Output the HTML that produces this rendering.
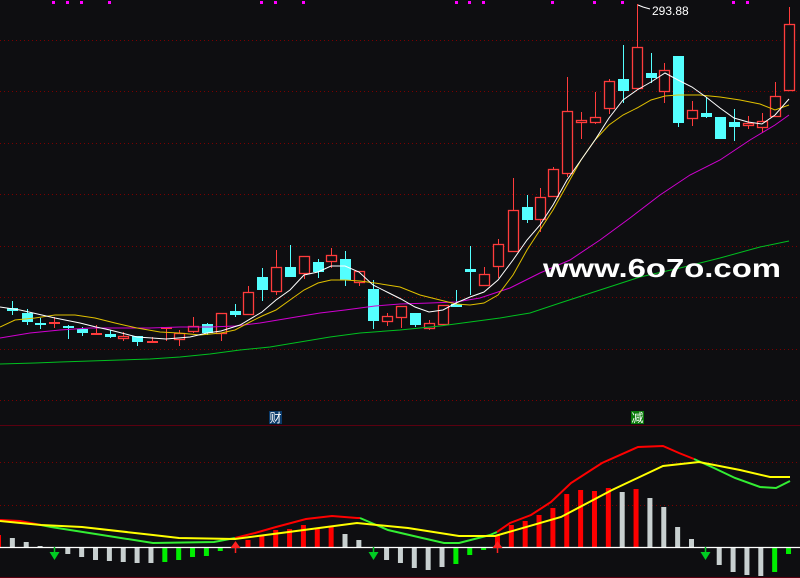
<!DOCTYPE html>
<html><head><meta charset="utf-8"><style>
html,body{margin:0;padding:0;background:#0e0e11;}
svg{display:block;}
</style></head><body>
<svg id="s" width="800" height="578" viewBox="0 0 800 578" xmlns="http://www.w3.org/2000/svg">
<rect width="800" height="578" fill="#0e0e11"/>
<g stroke="#7a0000" stroke-width="1" stroke-dasharray="1 3" shape-rendering="crispEdges">
<line x1="0" y1="40.5" x2="800" y2="40.5"/><line x1="0" y1="91.5" x2="800" y2="91.5"/>
<line x1="0" y1="143.5" x2="800" y2="143.5"/><line x1="0" y1="194.5" x2="800" y2="194.5"/>
<line x1="0" y1="246.5" x2="800" y2="246.5"/><line x1="0" y1="297.5" x2="800" y2="297.5"/>
<line x1="0" y1="349.5" x2="800" y2="349.5"/><line x1="0" y1="400.5" x2="800" y2="400.5"/>
<line x1="0" y1="462.5" x2="800" y2="462.5"/><line x1="0" y1="505.5" x2="800" y2="505.5"/>
</g>
<line x1="0" y1="425.5" x2="800" y2="425.5" stroke="#5a0010" shape-rendering="crispEdges"/>
<line x1="0" y1="577.5" x2="800" y2="577.5" stroke="#5a0010" shape-rendering="crispEdges"/>
<g fill="#ff00ff">
<rect x="52" y="1" width="3" height="3"/><rect x="66" y="1" width="3" height="3"/><rect x="80" y="1" width="3" height="3"/><rect x="108" y="1" width="3" height="3"/>
<rect x="260" y="1" width="3" height="3"/><rect x="274" y="1" width="3" height="3"/><rect x="302" y="1" width="3" height="3"/>
<rect x="455" y="1" width="3" height="3"/><rect x="468" y="1" width="3" height="3"/><rect x="482" y="1" width="3" height="3"/>
<rect x="551" y="1" width="3" height="3"/><rect x="593" y="1" width="3" height="3"/><rect x="621" y="1" width="3" height="3"/>
<rect x="732" y="1" width="3" height="3"/><rect x="746" y="1" width="3" height="3"/>
</g>
<g id="candles"></g>
<g fill="none" stroke-width="1">
<polyline stroke="#00c020" points="0,364 35,363 60,362 90,361 120,360 150,359 180,357 210,354 240,350 270,347 300,342 330,337 360,333 400,330 440,326 470,322 500,318 530,313 560,303 600,290 640,277 680,268 720,258 760,247 789,241"/>
<polyline stroke="#d000d0" points="0,338 30,333 60,330 90,328 120,328 150,328 180,327 210,327 235,326 260,323 290,318 320,313 345,310 375,306 400,304 430,303 456,302 480,298 510,288 540,273 570,260 600,240 630,218 660,195 690,175 720,160 750,140 775,125 789,115"/>
<polyline stroke="#e0c000" points="0,327 15,320 35,318 55,315 75,315 95,318 115,323 137,328 160,332 179,333 200,335 221,333 235,330 250,322 262,316 276,310 290,300 304,290 318,283 331,280 345,280 360,281 375,283 400,287 420,295 440,300 456,304 470,305 484,303 498,295 513,275 527,250 540,230 553,210 567,185 581,160 595,140 609,125 623,115 637,108 651,100 665,96 678,95 700,95 720,97 740,100 760,104 775,110 789,105"/>
<polyline stroke="#ffffff" points="0,307 20,310 55,318 80,323 96,327 110,330 137,337 152,338 166,339 190,337 207,333 221,331 240,325 262,312 276,300 290,290 304,275 318,272 331,266 345,266 359,272 373,285 387,292 401,299 415,307 429,312 443,310 456,303 470,297 484,292 498,280 513,260 527,240 540,225 553,205 567,180 581,160 595,140 609,118 623,100 637,90 651,82 665,73 678,80 692,87 706,97 720,108 734,118 748,122 762,124 775,115 789,99"/>
</g>
<path d="M638,5 L643,7 L650,9" stroke="#fff" fill="none" stroke-width="1"/>
<text x="652" y="15" fill="#ffffff" font-family="Liberation Sans, sans-serif" font-size="12">293.88</text>
<text x="543" y="277" fill="#ffffff" font-family="Liberation Sans, sans-serif" font-weight="bold" font-size="26" textLength="238" lengthAdjust="spacingAndGlyphs">www.6o7o.com</text>
<rect x="269" y="411" width="13" height="13" fill="#0a3a6a"/>
<text x="269.5" y="422" fill="#fff" font-family="Liberation Sans, 'Noto Sans CJK SC', sans-serif" font-size="12">财</text>
<rect x="631" y="411" width="13" height="13" fill="#0a7a0a"/>
<text x="631.5" y="422" fill="#fff" font-family="Liberation Sans, 'Noto Sans CJK SC', sans-serif" font-size="12">减</text>
<g id="bars"></g>
<line x1="0" y1="547.5" x2="800" y2="547.5" stroke="#ffffff" stroke-width="1.2"/>
<g fill="none" stroke-width="2">
<polyline stroke="#ff0000" points="0,520 20,521 41,525"/>
<polyline stroke="#33ee33" points="41,525 51,527 102,535 153,543 214,542 235,538"/>
<polyline stroke="#ff0000" points="235,538 255,533 276,527 306,519 332,516 357,518 360,518"/>
<polyline stroke="#33ee33" points="360,518 388,530 418,537 444,543 459,543 490,535 497,532"/>
<polyline stroke="#ff0000" points="497,532 510,523 531,515 551,502 571,483 602,463 638,447 663,446 679,453 694,459"/>
<polyline stroke="#33ee33" points="694,459 714,468 735,478 760,487 776,488 790,481"/>
<polyline stroke="#ffff00" points="0,521 41,525 82,527 153,535 179,538 235,539 281,533 357,523 408,528 459,536 495,536 561,517 612,490 663,466 699,462 740,470 770,477 790,477"/>
</g>
<g id="arrows"></g>
</svg>
<script>
var NS="http://www.w3.org/2000/svg";
function el(p,n,a){var e=document.createElementNS(NS,n);for(var k in a)e.setAttribute(k,a[k]);p.appendChild(e);return e;}
var C=[[12,308,311,301,315,'c'],[27,313,322,309,325,'c'],[40,323,324,318,329,'c'],[54,322,324,317,328,'f'],[68,326,327,325,339,'c'],[82,329,333,327,336,'c'],[96,333,334,325,334,'f'],[110,334,337,330,338,'c'],[123,336,339,332,341,'r'],[137,336,342,336,346,'c'],[152,341,343,337,343,'f'],[166,327,328,327,341,'f'],[179,333,340,330,346,'r'],[193,326,332,317,333,'r'],[207,324,333,323,335,'c'],[221,313,334,313,341,'r'],[235,311,315,304,317,'c'],[248,292,315,286,315,'r'],[262,277,290,268,301,'c'],[276,267,292,250,295,'r'],[290,267,277,245,277,'c'],[304,256,274,256,279,'r'],[318,262,272,259,278,'c'],[331,255,262,248,268,'r'],[345,259,280,251,286,'c'],[359,271,283,271,286,'r'],[373,289,321,280,329,'c'],[387,316,322,313,326,'r'],[401,306,318,306,328,'r'],[415,313,325,313,327,'c'],[429,323,329,320,330,'r'],[443,305,325,305,325,'r'],[456,304,307,290,307,'c'],[470,269,272,246,295,'c'],[484,274,286,267,286,'r'],[498,244,267,239,278,'r'],[513,210,252,178,252,'r'],[527,207,220,195,223,'c'],[540,197,220,188,232,'r'],[553,169,197,167,197,'r'],[567,111,174,77,177,'r'],[581,120,123,112,139,'r'],[595,117,123,92,124,'r'],[609,81,109,79,114,'r'],[623,79,91,45,103,'c'],[637,47,89,4,89,'r'],[651,73,78,53,83,'c'],[664,70,92,63,103,'r'],[678,56,123,56,127,'c'],[692,110,119,101,126,'r'],[706,113,117,97,118,'c'],[720,117,139,117,139,'c'],[734,122,127,109,141,'c'],[748,123,126,116,129,'r'],[762,121,128,113,133,'r'],[775,96,117,82,117,'r'],[789,24,91,7,91,'r']];
var g=document.getElementById('candles');
C.forEach(function(c){var x=c[0],t=c[1],b=c[2],wt=c[3],wb=c[4],k=c[5];
var col=k=='c'?'#54ffff':'#ff3c3c';
el(g,'line',{x1:x+.5,y1:wt,x2:x+.5,y2:wb,stroke:col,'shape-rendering':'crispEdges'});
if(k=='r'){el(g,'rect',{x:x-4.5,y:t+.5,width:10,height:Math.max(b-t-1,1),fill:'#0e0e11',stroke:col,'stroke-width':1.3});}
else{el(g,'rect',{x:x-5,y:t,width:11,height:Math.max(b-t,2),fill:col});}
});
var B=[[0,535,'r'],[1,538,'g'],[2,542,'g'],[3,546,'g'],[5,553,'g'],[6,556,'g'],[7,559,'g'],[8,560,'g'],[9,561,'g'],[10,562,'g'],[11,562,'g'],[12,561,'n'],[13,559,'n'],[14,556,'n'],[15,555,'n'],[16,550,'n'],[18,540,'r'],[19,536,'r'],[20,530,'r'],[21,529,'r'],[22,525,'r'],[23,528,'r'],[24,526,'r'],[25,534,'g'],[26,540,'g'],[28,559,'g'],[29,562,'g'],[30,567,'g'],[31,569,'g'],[32,566,'g'],[33,563,'n'],[34,554,'n'],[35,549,'n'],[36,535,'r'],[37,525,'r'],[38,521,'r'],[39,515,'r'],[40,508,'r'],[41,494,'r'],[42,490,'r'],[43,491,'r'],[44,488,'r'],[45,492,'g'],[46,489,'r'],[47,498,'g'],[48,507,'g'],[49,527,'g'],[50,539,'g'],[52,564,'g'],[53,571,'g'],[54,574,'g'],[55,575,'g'],[56,571,'n'],[57,553,'n']];
var gb=document.getElementById('bars');
B.forEach(function(b){var x=-1.5+13.86*b[0];var y=b[1];var col=b[2]=='r'?'#ff0000':(b[2]=='g'?'#c8d0d0':'#00ee00');
var y1=Math.min(y,547),h=Math.abs(547-y)+1;el(gb,'rect',{x:x-2.5,y:y1,width:5,height:h,fill:col});});
var ga=document.getElementById('arrows');
[[54.5,'d'],[373.5,'d'],[705.5,'d'],[235.5,'u'],[497.5,'u']].forEach(function(a){var x=a[0];
if(a[1]=='d'){el(ga,'line',{x1:x,y1:547,x2:x,y2:553,stroke:'#00cc22','stroke-width':1.5});el(ga,'path',{d:'M'+(x-5)+',552 L'+(x+5)+',552 L'+x+',560 Z',fill:'#00cc22'});}
else{el(ga,'line',{x1:x,y1:546,x2:x,y2:553,stroke:'#ff2020','stroke-width':1.5});el(ga,'path',{d:'M'+(x-5)+',548 L'+(x+5)+',548 L'+x+',541 Z',fill:'#ff2020'});}
});
</script>
</body></html>
